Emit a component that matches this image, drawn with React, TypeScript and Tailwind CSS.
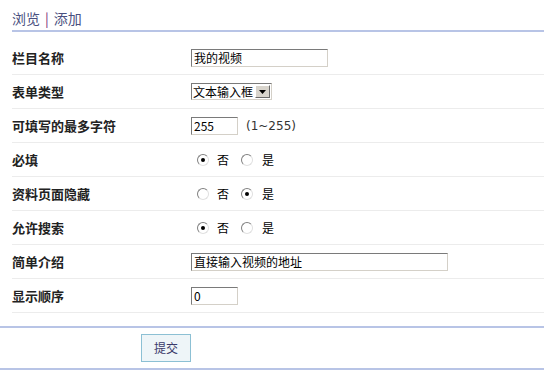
import React from "react";

const font = { fontFamily: '"Noto Sans CJK SC", "DejaVu Sans", sans-serif' };

function TextBox({ value, w }: { value: string; w: string }) {
  return (
    <div
      className={`${w} h-[18px] flex items-center pl-[2px] bg-white border border-t-[#7a7a7a] border-l-[#7a7a7a] border-b-[#d4d0c8] border-r-[#d4d0c8] text-[12px] leading-none text-black whitespace-nowrap`}
    >
      {value}
    </div>
  );
}

function Radio({ checked }: { checked: boolean }) {
  return (
    <span className="w-[12px] h-[12px] rounded-full border border-t-[#808080] border-l-[#808080] border-b-[#e0e0e0] border-r-[#e0e0e0] bg-white flex items-center justify-center">
      {checked && <span className="w-[4px] h-[4px] rounded-full bg-black" />}
    </span>
  );
}

function RadioPair({ yes }: { yes: boolean }) {
  return (
    <div className="flex items-center text-[12px] text-black leading-none">
      <span className="ml-[6px]"><Radio checked={!yes} /></span>
      <span className="ml-[8px]">否</span>
      <span className="ml-[12px]"><Radio checked={yes} /></span>
      <span className="ml-[9px]">是</span>
    </div>
  );
}

function Row({ label, children }: { label: string; children: React.ReactNode }) {
  return (
    <div className="flex items-center h-[34px] border-b border-[#ececec]">
      <div className="w-[179px] text-[13px] font-bold text-[#222] leading-none">{label}</div>
      <div className="flex items-center">{children}</div>
    </div>
  );
}

export default function App() {
  return (
    <div className="w-[544px] h-[374px] bg-white relative overflow-hidden" style={font}>
      <div className="pl-[12px] pt-[9px]">
        <div className="flex items-center text-[14px] leading-none text-[#4a5080] h-[18px]">
          <span>浏览</span>
          <span className="mx-[5px] text-[#7a2a7a]">|</span>
          <span>添加</span>
        </div>
        <div className="mt-[3px] h-[2px] bg-[#b8c4e6]" />
        <div className="mt-[9px]">
          <Row label="栏目名称">
            <TextBox value="我的视频" w="w-[137px]" />
          </Row>
          <Row label="表单类型">
            <div className="w-[81px] h-[17px] flex items-center bg-white border border-t-[#7a7a7a] border-l-[#7a7a7a] border-b-[#d4d0c8] border-r-[#d4d0c8]">
              <span className="flex-1 pl-[1px] text-[12px] leading-none text-black whitespace-nowrap">文本输入框</span>
              <span className="shrink-0 w-[15px] h-[13px] mr-[1px] bg-[#d8d4cc] border border-t-white border-l-white border-b-[#6a6a6a] border-r-[#6a6a6a] flex items-center justify-center">
                <svg width="7" height="4" viewBox="0 0 7 4"><path d="M0 0h7L3.5 4z" fill="#000" /></svg>
              </span>
            </div>
          </Row>
          <Row label="可填写的最多字符">
            <TextBox value="255" w="w-[47px]" />
            <span className="ml-[8px] text-[12px] text-[#333] leading-none" style={{ fontFamily: '"DejaVu Sans", sans-serif' }}>(1~255)</span>
          </Row>
          <Row label="必填">
            <RadioPair yes={false} />
          </Row>
          <Row label="资料页面隐藏">
            <RadioPair yes={true} />
          </Row>
          <Row label="允许搜索">
            <RadioPair yes={false} />
          </Row>
          <Row label="简单介绍">
            <TextBox value="直接输入视频的地址" w="w-[257px]" />
          </Row>
          <Row label="显示顺序">
            <TextBox value="0" w="w-[47px]" />
          </Row>
        </div>
      </div>
      <div className="mt-[13px] h-[2px] bg-[#b8c4e6]" />
      <div className="h-[40px] flex items-center pl-[141px]">
        <div className="w-[50px] h-[28px] flex items-center justify-center bg-[#eef5f8] border border-[#8cc0d4] text-[12px] text-[#3a3a6a] leading-none">
          提交
        </div>
      </div>
      <div className="h-[2px] bg-[#b8c4e6]" />
    </div>
  );
}
